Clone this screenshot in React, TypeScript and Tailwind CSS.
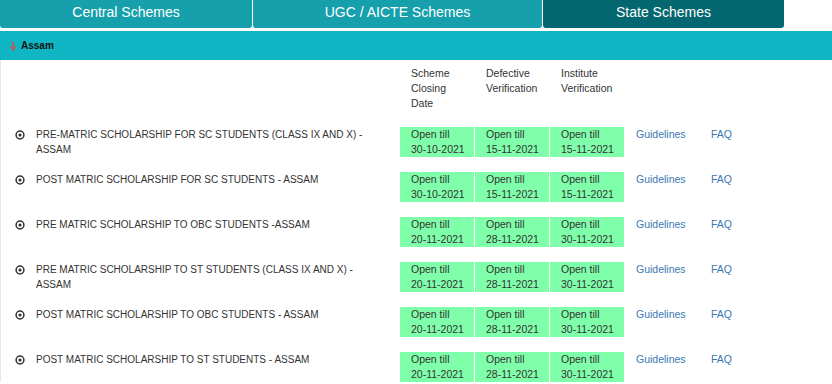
import React from "react";

const tabs = [
  { label: "Central Schemes", width: "w-[252px]", active: false },
  { label: "UGC / AICTE Schemes", width: "w-[289px]", active: false },
  { label: "State Schemes", width: "w-[241px]", active: true },
];

const schemes = [
  { name: "PRE-MATRIC SCHOLARSHIP FOR SC STUDENTS (CLASS IX AND X) - ASSAM", dates: ["30-10-2021", "15-11-2021", "15-11-2021"] },
  { name: "POST MATRIC SCHOLARSHIP FOR SC STUDENTS - ASSAM", dates: ["30-10-2021", "15-11-2021", "15-11-2021"] },
  { name: "PRE MATRIC SCHOLARSHIP TO OBC STUDENTS -ASSAM", dates: ["20-11-2021", "28-11-2021", "30-11-2021"] },
  { name: "PRE MATRIC SCHOLARSHIP TO ST STUDENTS (CLASS IX AND X) - ASSAM", dates: ["20-11-2021", "28-11-2021", "30-11-2021"] },
  { name: "POST MATRIC SCHOLARSHIP TO OBC STUDENTS - ASSAM", dates: ["20-11-2021", "28-11-2021", "30-11-2021"] },
  { name: "POST MATRIC SCHOLARSHIP TO ST STUDENTS - ASSAM", dates: ["20-11-2021", "28-11-2021", "30-11-2021"] },
];

function RadioDot() {
  return (
    <svg width="10" height="10" viewBox="0 0 10 10" className="mt-[3px]">
      <circle cx="5" cy="5" r="3.9" fill="none" stroke="#333" strokeWidth="1.5" />
      <circle cx="5" cy="5" r="1.6" fill="#333" />
    </svg>
  );
}

function DownArrow() {
  return (
    <svg width="6" height="10" viewBox="0 0 6 10">
      <path d="M3 0.5 V7" stroke="#c9545a" strokeWidth="1.6" />
      <path d="M0.5 5.5 L3 9 L5.5 5.5" fill="none" stroke="#c9545a" strokeWidth="1.4" />
    </svg>
  );
}

export default function App() {
  return (
    <div className="w-[832px] h-[384px] overflow-hidden bg-white font-['Liberation_Sans',Arial,sans-serif]">
      <div className="flex gap-px h-[28px]">
        {tabs.map((t) => (
          <div
            key={t.label}
            className={`${t.width} h-[28px] rounded-b-[3px] text-center text-[14px] leading-[24px] text-white ${
              t.active ? "bg-[#04666f]" : "bg-[#15a0ab]"
            }`}
          >
            {t.label}
          </div>
        ))}
      </div>

      <div className="mt-[3px] flex h-[29px] items-center gap-[5px] bg-[#11b6c4] pl-[10px]">
        <DownArrow />
        <span className="text-[10px] font-bold text-[#111]">Assam</span>
      </div>

      <div className="border-l border-[#e8e8e8] pt-[6px] text-[#333]">
        <div className="flex text-[10.5px] leading-[15px]">
          <div className="w-[399px] shrink-0" />
          <div className="w-[75px] pl-[11px]">Scheme<br />Closing<br />Date</div>
          <div className="w-[75px] pl-[11px]">Defective<br />Verification</div>
          <div className="w-[75px] pl-[11px]">Institute<br />Verification</div>
        </div>

        <div className="mt-[16px] flex flex-col gap-[15px]">
          {schemes.map((s) => (
            <div key={s.name} className="flex h-[30px] items-start leading-[15px]">
              <div className="flex w-[35px] shrink-0 justify-center pl-[3px]">
                <RadioDot />
              </div>
              <div className="w-[352px] text-[10px]">{s.name}</div>
              <div className="w-[12px] shrink-0" />
              {s.dates.map((d, i) => (
                <div key={i} className="h-[30px] w-[75px] border-r border-white bg-[#80ffaa] pl-[11px] text-[10.5px]">
                  Open till
                  <br />
                  {d}
                </div>
              ))}
              <div className="w-[75px] pl-[11px] text-[10.5px] text-[#3b78b5]">Guidelines</div>
              <div className="w-[75px] pl-[11px] text-[10.5px] text-[#3b78b5]">FAQ</div>
            </div>
          ))}
        </div>
      </div>
    </div>
  );
}
